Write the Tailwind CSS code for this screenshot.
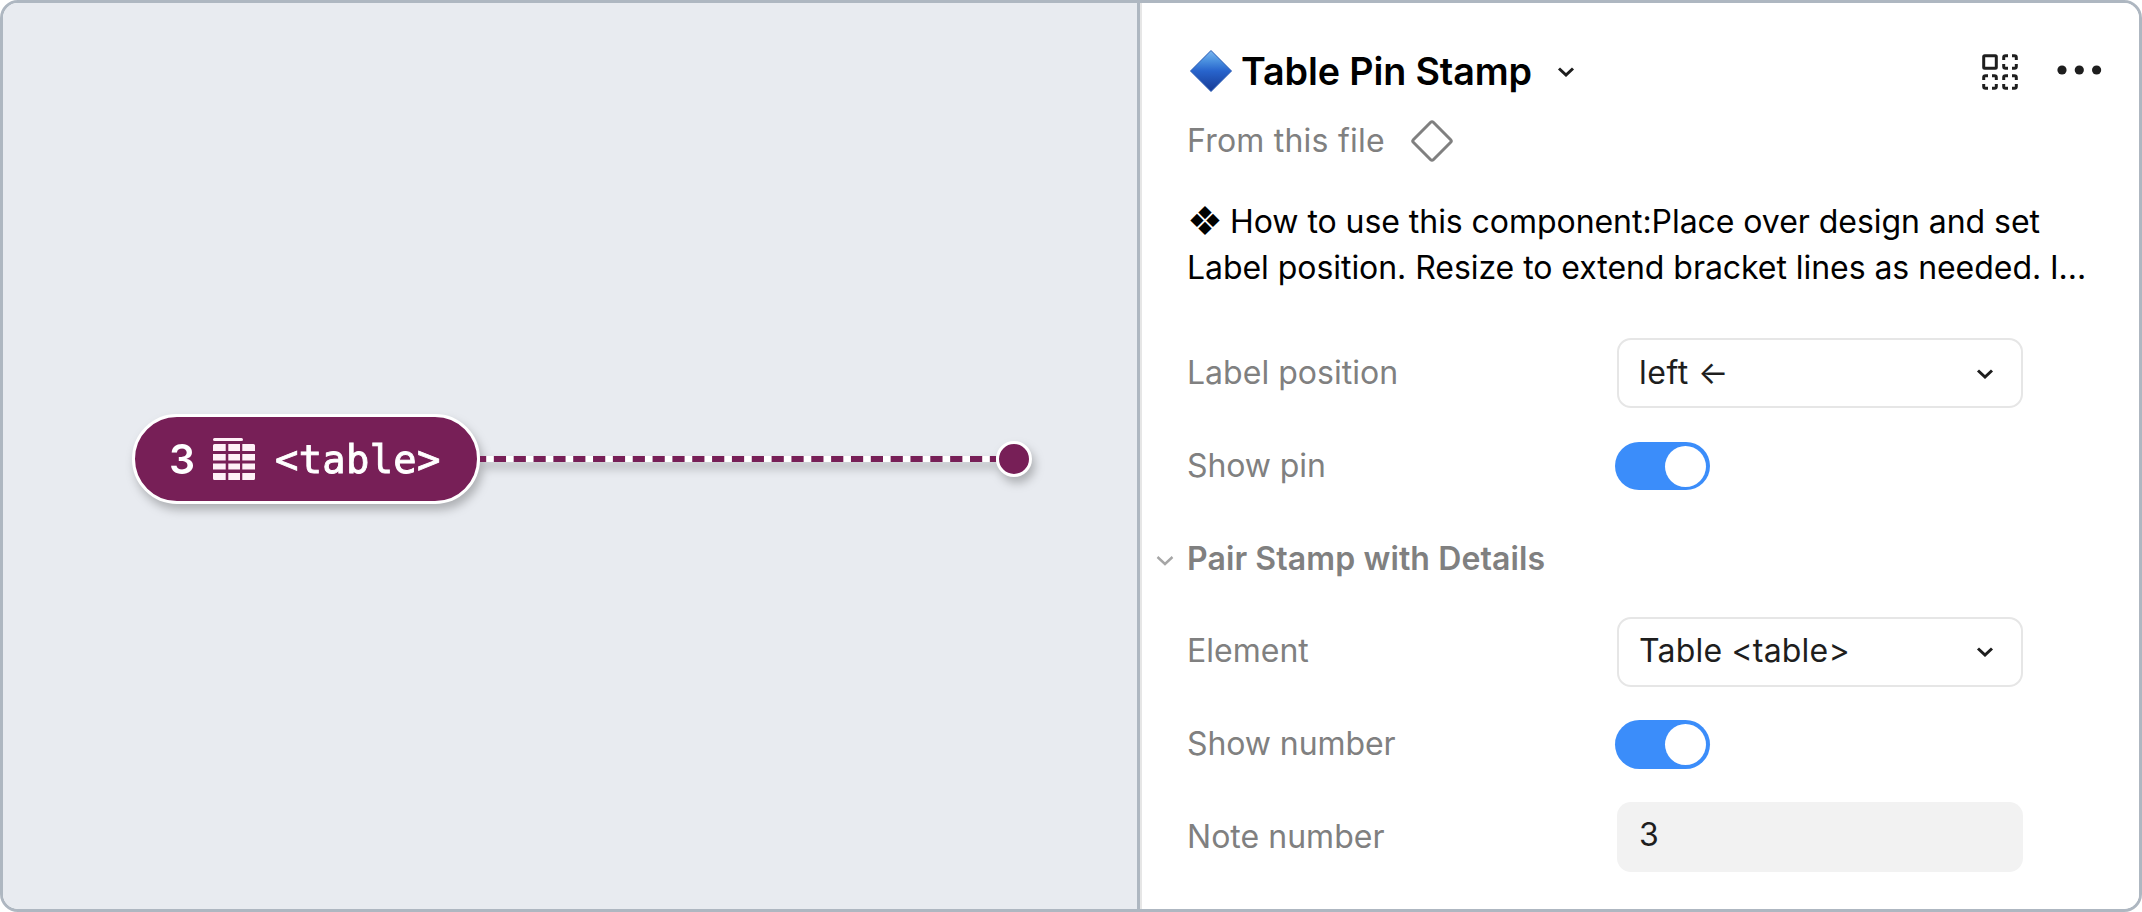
<!DOCTYPE html>
<html lang="en">
<head>
<meta charset="utf-8">
<title>Table Pin Stamp</title>
<script src="https://cdn.jsdelivr.net/npm/@tailwindcss/browser@4"></script>
</head>
<body class="h-[912px] w-[2142px] overflow-hidden bg-white">
<main class="flex h-[912px] w-[2142px] overflow-hidden rounded-[18px] border-3 border-[#aeb7c1] bg-white font-['Inter',sans-serif] text-[32px] leading-[46.4px] tracking-[0.02px] text-[#1e1e1e]">

  <!-- Canvas -->
  <section class="flex w-[1137px] shrink-0 items-center border-r-3 border-[#aeb7c1] bg-[#e8ebf0] pl-[129px] pt-[6px]">
    <div class="flex items-center drop-shadow-[3px_6px_5px_rgba(0,0,0,0.25)]">
      <div class="flex h-[90px] w-[348px] items-center rounded-full border-3 border-white bg-[#771f57] pl-[34px] text-[41px] leading-none tracking-normal text-white">
        <span class="w-[24px] font-semibold">3</span>
        <svg class="ml-[20px] h-[42px] w-[42px]" viewBox="0 0 42 42" fill="#fff0f7">
          <rect x="0" y="0" width="30" height="3" rx="1.5"/>
          <path d="M0 7.500Q0 6 1.500 6H12.700V13H0ZM15.300 6H27V13H15.300ZM29.300 6H40.500Q42 6 42 7.500V13H29.300ZM0 16H12.700V22.500H0ZM15.300 16H27V22.500H15.300ZM29.300 16H42V22.500H29.300ZM0 25.500H12.700V31.500H0ZM15.300 25.500H27V31.500H15.300ZM29.300 25.500H42V31.500H29.300ZM0 35H12.700V42H1.500Q0 42 0 40.500ZM15.300 35H27V42H15.300ZM29.300 35H42V40.500Q42 42 40.500 42H29.300Z"/>
        </svg>
        <span class="ml-[20px] mt-[2px] font-['DejaVu_Sans_Mono',monospace] text-[38.800px] tracking-[0.300px] [-webkit-text-stroke:0.900px_white]">&lt;table&gt;</span>
      </div>
      <svg class="h-[6px] w-[516px]" viewBox="0 0 516 6">
        <rect width="516" height="6" fill="#fff"/>
        <line x1="-6" y1="3" x2="516" y2="3" stroke="#771f57" stroke-width="6" stroke-dasharray="12.200 7.640"/>
      </svg>
      <div class="size-[36px] rounded-full border-3 border-white bg-[#771f57]"></div>
    </div>
  </section>

  <!-- Properties panel -->
  <section class="flex grow flex-col border-l-2 border-[#e6e6e6] bg-white pl-[45px]">
    <header class="mt-[41px] flex h-[54px] items-center text-black">
      <svg class="ml-[2px] h-[44px] w-[44px]" viewBox="0 0 44 44">
        <defs><linearGradient id="gem" x1="0" y1="0" x2="0" y2="1"><stop offset="0" stop-color="#7db8f0"/><stop offset=".25" stop-color="#4a90df"/><stop offset=".5" stop-color="#2864cc"/><stop offset="1" stop-color="#163a94"/></linearGradient></defs>
        <path d="M22 1.500 42.500 22 22 42.500 1.500 22Z" fill="url(#gem)" stroke="#2458b4" stroke-width="1" stroke-linejoin="round"/>
      </svg>
      <h1 class="ml-[8px] w-[293px] whitespace-nowrap text-[37.700px] font-semibold tracking-[-0.120px]">Table Pin Stamp</h1>
      <svg class="ml-[23px] mt-[2px] h-[10px] w-[18px]" viewBox="0 0 18 10" fill="none" stroke="#1e1e1e" stroke-width="3"><path d="M2 1.500 9 8 16 1.500"/></svg>
      <svg class="ml-[407px] mt-px h-[36px] w-[36px]" viewBox="0 0 36 36" fill="none" stroke="#1e1e1e" stroke-width="3">
        <rect x="1.700" y="1.700" width="12.600" height="12.600" rx="1"/>
        <path id="slot" d="M21.700 6V3.500Q21.700 1.700 23.500 1.700H26M30 1.700H32.500Q34.300 1.700 34.300 3.500V6M34.300 10V12.500Q34.300 14.300 32.500 14.300H30M26 14.300H23.500Q21.700 14.300 21.700 12.500V10"/>
        <use href="#slot" x="-20" y="20"/><use href="#slot" y="20"/>
      </svg>
      <svg class="ml-[38.500px] mt-[-3px] h-[10px] w-[46px]" viewBox="0 0 46 10" fill="#1e1e1e"><circle cx="5" cy="5" r="4.600"/><circle cx="22.300" cy="5" r="4.600"/><circle cx="39.600" cy="5" r="4.600"/></svg>
    </header>

    <div class="mt-[20px] flex h-[46px] items-center text-[#808080]">
      <span class="w-[223px] tracking-[0.220px]">From this file</span>
      <svg class="size-[44px]" viewBox="0 0 44 44" fill="none" stroke="#808080" stroke-width="3"><path d="M20.700 3.300Q22 2 23.300 3.300L40.700 20.700Q42 22 40.700 23.300L23.300 40.700Q22 42 20.700 40.700L3.300 23.300Q2 22 3.300 20.700Z"/></svg>
    </div>

    <p class="mt-[35px] h-[93px] whitespace-nowrap tracking-[-0.050px] text-black"><span class="relative top-[2px] inline-block w-[43px] font-['DejaVu_Sans',sans-serif] text-[40px] leading-[0]">❖</span>How to use this component:Place over design and set<br>Label position. Resize to extend bracket lines as needed. I...</p>

    <div class="mt-[35px] grid grid-cols-[428.300px_410px] auto-rows-[92.750px] items-center text-[#808080]">
      <span>Label position</span>
      <div class="ml-[1.700px] flex h-[70px] w-[406px] items-center justify-between rounded-[14px] border-2 border-[#e6e6e6] pl-[20px] pr-[27px] text-[#1e1e1e]">
        <span class="tracking-[0.500px]">left ←</span>
        <svg class="mt-px h-[10px] w-[18px]" viewBox="0 0 18 10" fill="none" stroke="#1e1e1e" stroke-width="3"><path d="M2 1.500 9 8 16 1.500"/></svg>
      </div>

      <span class="tracking-[-0.100px]">Show pin</span>
      <div class="flex h-[48.500px] w-[95px] items-center justify-end rounded-full bg-[#3b8dfa] pr-[4px]"><div class="size-[41px] rounded-full bg-white"></div></div>

      <div class="relative col-span-2 font-semibold tracking-[0.100px]">Pair Stamp with Details
        <svg class="absolute left-[-31px] top-[19px] h-[11px] w-[18px]" viewBox="0 0 18 11" fill="none" stroke="#a6a6a6" stroke-width="2.400"><path d="M1.500 2 9 9 16.500 2"/></svg>
      </div>

      <span>Element</span>
      <div class="ml-[1.700px] flex h-[70px] w-[406px] items-center justify-between rounded-[14px] border-2 border-[#e6e6e6] pl-[20px] pr-[27px] text-[#1e1e1e]">
        <span class="tracking-[0.200px]">Table &lt;table&gt;</span>
        <svg class="mt-px h-[10px] w-[18px]" viewBox="0 0 18 10" fill="none" stroke="#1e1e1e" stroke-width="3"><path d="M2 1.500 9 8 16 1.500"/></svg>
      </div>

      <span class="tracking-[-0.080px]">Show number</span>
      <div class="flex h-[48.500px] w-[95px] items-center justify-end rounded-full bg-[#3b8dfa] pr-[4px]"><div class="size-[41px] rounded-full bg-white"></div></div>

      <span>Note number</span>
      <div class="ml-[1.700px] flex h-[70px] w-[406px] items-center rounded-[14px] bg-[#f2f2f2] pb-[4px] pl-[22px] text-[#1e1e1e]">3</div>
    </div>
  </section>
</main>
</body>
</html>
